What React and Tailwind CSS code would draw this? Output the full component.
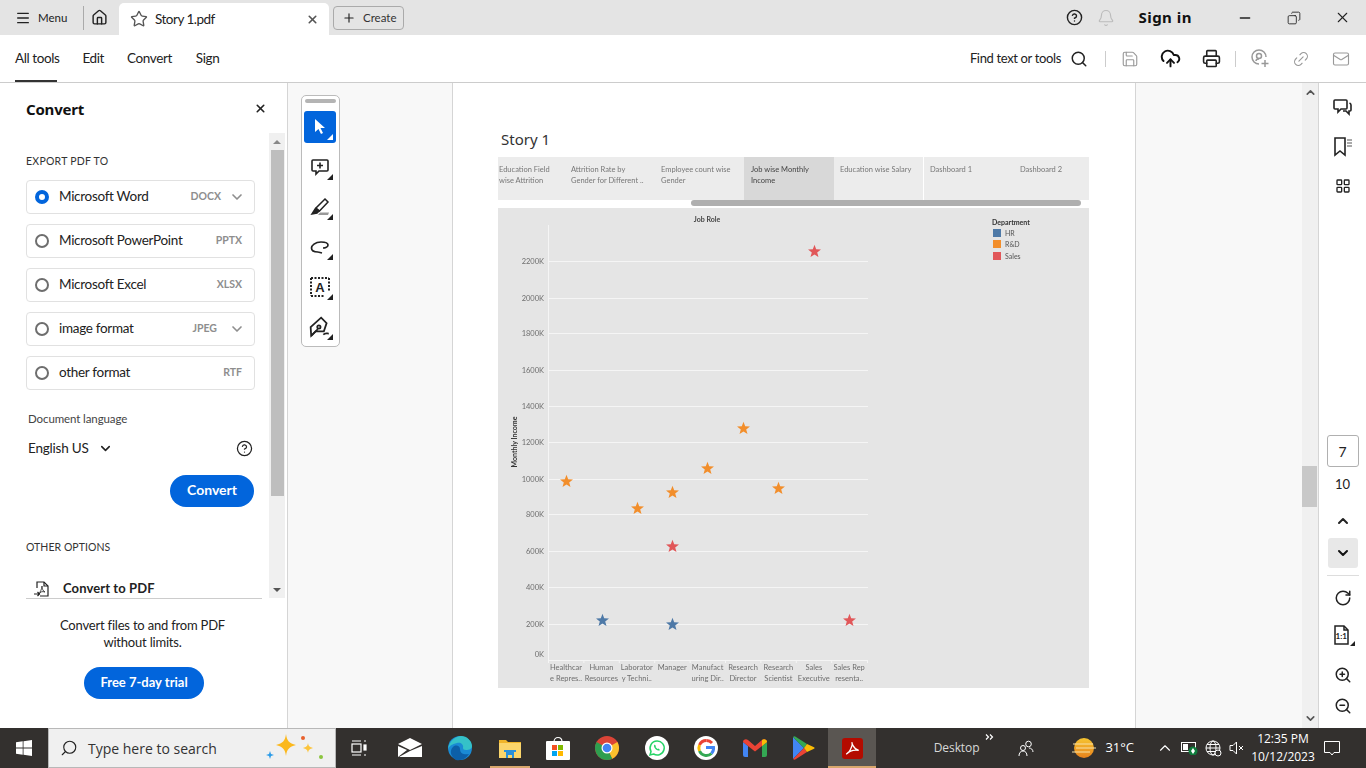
import React from "react";
import { Menu, House, Star, X, Plus, CircleHelp, Bell, Minus, Search, Save, CloudUpload, Printer, Link2, Mail, ChevronDown, ChevronUp, RotateCw, ZoomIn, ZoomOut, LayoutGrid, Copy } from "lucide-react";

const TOOL_FONT = "font-['Lato','Noto_Sans',sans-serif]";

const formats = [
  { label: "Microsoft Word", ext: "DOCX", chevron: true, checked: true },
  { label: "Microsoft PowerPoint", ext: "PPTX" },
  { label: "Microsoft Excel", ext: "XLSX" },
  { label: "image format", ext: "JPEG", chevron: true },
  { label: "other format", ext: "RTF" },
];

const storyTabs = [
  ["Education Field", "wise Attrition"],
  ["Attrition Rate by", "Gender for Different .."],
  ["Employee count wise", "Gender"],
  ["Job wise Monthly", "Income"],
  ["Education wise Salary"],
  ["Dashboard 1"],
  ["Dashboard 2"],
];

const yTicks = [
  ["2200K", 53], ["2000K", 90], ["1800K", 125], ["1600K", 162], ["1400K", 198], ["1200K", 234],
  ["1000K", 271], ["800K", 306], ["600K", 343], ["400K", 379], ["200K", 416],
];

const xLabels = [
  ["Healthcar", "e Repres.."], ["Human", "Resources"], ["Laborator", "y Techni.."], ["Manager", ""],
  ["Manufact", "uring Dir.."], ["Research", "Director"], ["Research", "Scientist"], ["Sales", "Executive"], ["Sales Rep", "resenta.."],
];

const BLUE = "#4e79a7";
const ORANGE = "#f28e2b";
const RED = "#e15759";

// coordinates relative to the grey chart panel
const points = [
  [68.5, 273.5, ORANGE], [104.5, 412.5, BLUE], [139.5, 300.5, ORANGE], [174.5, 284.5, ORANGE], [174.5, 338.5, RED], [174.5, 416.5, BLUE],
  [209.5, 260.5, ORANGE], [245.5, 220.5, ORANGE], [280.5, 280.5, ORANGE], [316.5, 43.5, RED], [351.5, 412.5, RED],
];

function starPoints(cx, cy, r) {
  const out = [];
  for (let i = 0; i < 10; i++) {
    const radius = i % 2 === 0 ? r : r * 0.42;
    const a = -Math.PI / 2 + (i * Math.PI) / 5;
    out.push(`${(cx + radius * Math.cos(a)).toFixed(1)},${(cy + radius * Math.sin(a)).toFixed(1)}`);
  }
  return out.join(" ");
}

const Chart = () => (
  <svg width="591" height="480" className="block blur-[0.3px]" style={{ fontFamily: "'Lato', sans-serif" }}>
    <rect width="591" height="480" fill="#e5e5e5" />
    <text x="209" y="14" fontSize="7" fontWeight="700" fill="#444" textAnchor="middle">Job Role</text>
    <text x="19" y="234" fontSize="7" fontWeight="700" fill="#333" textAnchor="middle" transform="rotate(-90 19 234)">Monthly Income</text>
    <line x1="50.5" y1="17" x2="50.5" y2="452" stroke="#f5f5f5" />
    <line x1="50" y1="452.5" x2="369" y2="452.5" stroke="#f5f5f5" />
    {yTicks.map(([label, y]) => (
      <g key={label}>
        <line x1="50" y1={y + 0.5} x2="370" y2={y + 0.5} stroke="#f5f5f5" />
        <text x="46" y={y + 3} fontSize="7.5" fill="#6e6e6e" textAnchor="end">{label}</text>
      </g>
    ))}
    <text x="46" y="449" fontSize="7.5" fill="#6e6e6e" textAnchor="end">0K</text>
    {xLabels.map(([a, b], i) => (
      <g key={a + b}>
        <line x1={50.5 + i * 35.4} y1="452" x2={50.5 + i * 35.4} y2="455" stroke="#f5f5f5" />
        <text x={68 + i * 35.4} y="462" fontSize="7.5" fill="#6e6e6e" textAnchor="middle">{a}</text>
        <text x={68 + i * 35.4} y="473" fontSize="7.5" fill="#6e6e6e" textAnchor="middle">{b}</text>
      </g>
    ))}
    <line x1="369.5" y1="452" x2="369.5" y2="455" stroke="#f5f5f5" />
    {points.map(([x, y, color]) => (
      <polygon key={`${x}-${y}`} points={starPoints(x, y, 6.8)} fill={color} />
    ))}
    <text x="494" y="17" fontSize="7" fontWeight="700" fill="#333">Department</text>
    {[[BLUE, "HR", 21], [ORANGE, "R&D", 32], [RED, "Sales", 44]].map(([color, label, y]) => (
      <g key={label}>
        <rect x="495" y={y} width="8" height="8" fill={color} />
        <text x="507" y={y + 7} fontSize="7" fill="#555">{label}</text>
      </g>
    ))}
  </svg>
);

const StoryTabs = () => (
  <div className="w-[591px] h-[43px] bg-[#ececec] flex font-['Lato',sans-serif] text-[7.5px] leading-[11px] text-[#777] blur-[0.3px]">
    {storyTabs.map((lines, i) => (
      <div
        key={lines[0]}
        className={
          i === 3 ? "w-[90px] shrink-0 pl-[7px] pt-[7px] bg-[#d8d8d8] text-[#444]"
            : i === 0 ? "w-[66px] shrink-0 pl-[1px] pt-[7px]"
            : i === 4 ? "w-[90px] shrink-0 pl-[6px] pt-[7px] border-r border-white"
            : i > 4 ? "w-[90px] shrink-0 pl-[6px] pt-[7px]"
            : "w-[90px] shrink-0 pl-[7px] pt-[7px]"
        }
      >
        {lines.map((l) => (
          <div key={l} className="whitespace-nowrap">{l}</div>
        ))}
      </div>
    ))}
  </div>
);

const Corner = ({ white }) => (
  <span className={`absolute right-[3px] bottom-[3px] w-0 h-0 border-l-[6px] border-l-transparent border-b-[6px] ${white ? "border-b-white" : "border-b-[#222]"}`} />
);

const RailTool = ({ active, children }) => (
  <div className={`relative w-8 h-8 flex items-center justify-center rounded-[3px] mb-2 ${active ? "bg-[#0265dc]" : ""}`}>
    {children}
    <Corner white={active} />
  </div>
);

const LeftPanel = () => (
  <aside className="w-[288px] shrink-0 border-r border-[#d5d5d5] bg-white flex flex-col">
    <div className="h-[50px] pl-[26px] pr-[20px] pt-[2px] flex items-center justify-between">
      <span className="text-[15px] font-bold text-[#111] font-['Noto_Sans',sans-serif] tracking-[-0.2px]">Convert</span>
      <X size={13} strokeWidth={3} className="text-[#222] -mt-[1px]" />
    </div>
    <div className="h-[465px] overflow-hidden flex">
      <div className="w-[269px] pl-[26px] shrink-0">
        <div className="pt-[21px] h-[47px] text-[10.5px] leading-[14px] tracking-[0.25px] text-[#333]">EXPORT PDF TO</div>
        <div className="flex flex-col gap-[10px] w-[229px]">
          {formats.map((f) => (
            <div key={f.label} className="h-[34px] border border-[#e1e1e1] rounded-[4px] pl-2 pr-[11px] flex items-center">
              <span className={f.checked
                ? "w-[14px] h-[14px] rounded-full border-[4px] border-[#0265dc] bg-white"
                : "w-[14px] h-[14px] rounded-full border-2 border-[#6e6e6e] bg-white"} />
              <span className="ml-[10px] pb-[1px] text-[13.5px] tracking-[-0.3px] text-[#222] whitespace-nowrap">{f.label}</span>
              <span className={`ml-auto text-[10.5px] font-bold text-[#8e8e8e] ${f.ext === "JPEG" ? "mr-[12px]" : f.ext === "DOCX" ? "mr-[8px]" : "mr-[1px]"}`}>{f.ext}</span>
              {f.chevron && <ChevronDown size={16} strokeWidth={2.5} className="text-[#8e8e8e] -mr-[2px]" />}
            </div>
          ))}
        </div>
        <div className="ml-[2px] mt-[21px] text-[11.5px] tracking-[-0.1px] leading-[16px] text-[#444]">Document language</div>
        <div className="ml-[2px] mt-[11px] w-[225px] h-[20px] flex items-center">
          <span className="text-[13.5px] tracking-[-0.2px] text-[#222]">English US</span>
          <ChevronDown size={15} strokeWidth={2.5} className="ml-[9px] text-[#222]" />
          <CircleHelp size={17} strokeWidth={1.75} className="ml-auto text-[#222]" />
        </div>
        <div className="mt-[17px] w-[228px] flex justify-end">
          <div className="w-[84px] h-[32px] pb-[3px] rounded-full bg-[#0265dc] text-white text-[14px] font-bold flex items-center justify-center">Convert</div>
        </div>
        <div className="mt-[32px] text-[10.5px] leading-[16px] tracking-[0.05px] text-[#333]">OTHER OPTIONS</div>
        <div className="mt-[24px] flex items-center h-[20px]">
          <svg width="18" height="18" viewBox="0 0 18 18" fill="none" stroke="#222" strokeWidth="1.2" className="ml-[7px]">
            <path d="M4 8V2h7l4 4v10H7" />
            <path d="M11 2v4h4" />
            <path d="M9 6c0 3 1 5 3 6-3-1-5 0-6 2 1-2 3-5 3-8z" strokeWidth="0.8" />
            <path d="M1 14h5M4.5 12l2 2-2 2" />
          </svg>
          <span className="ml-[12px] text-[13px] tracking-[0.1px] font-bold text-[#222]">Convert to PDF</span>
        </div>
      </div>
      <div className="w-[16px] bg-[#f0f0f0] flex flex-col items-center relative">
        <span className="mt-[7px] w-0 h-0 border-x-[4px] border-x-transparent border-b-[4px] border-b-[#888]" />
        <div className="mt-[6px] w-[13px] h-[346px] bg-[#bebebe]" />
        <span className="absolute bottom-[6px] w-0 h-0 border-x-[4px] border-x-transparent border-t-[4px] border-t-[#555]" />
      </div>
    </div>
    <div className="ml-[26px] w-[236px] border-t border-[#ccc]" />
    <div className="pt-[18px] w-[285px] text-center text-[13px] tracking-[-0.2px] leading-[17px] text-[#222]">
      <div>Convert files to and from PDF</div>
      <div>without limits.</div>
    </div>
    <div className="mt-[16px] ml-[84px] w-[120px] h-[32px] rounded-full bg-[#0265dc] text-white text-[13px] font-bold flex items-center justify-center">Free 7-day trial</div>
  </aside>
);

const ToolRail = () => (
  <div className="w-[165px] shrink-0 bg-[#f8f8f8] pl-[13px] pt-[12px] border-r border-[#d5d5d5]">
    <div className="w-[39px] h-[252px] bg-white border border-[#bbb] rounded-[5px] px-[2px] pt-[3px]">
      <div className="h-1 mb-2 mx-[1px] rounded-sm bg-[#b4b4b4]" />
      <RailTool active>
        <svg width="16" height="18" viewBox="0 0 16 18" fill="white"><path d="M3 1v13l3.5-3 2.5 5 2-1-2.5-5H13z" /></svg>
      </RailTool>
      <RailTool>
        <svg width="20" height="20" viewBox="0 0 20 20" fill="none" stroke="#222" strokeWidth="1.6"><path d="M3 3h14a1 1 0 0 1 1 1v9a1 1 0 0 1-1 1H9l-3 3v-3H3a1 1 0 0 1-1-1V4a1 1 0 0 1 1-1z" /><path d="M10 5.500v6M7 8.500h6" /></svg>
      </RailTool>
      <RailTool>
        <svg width="20" height="20" viewBox="0 0 20 20" fill="none" stroke="#222" strokeWidth="1.5"><path d="M15 2l3 3-8.500 9-3.500-3z" /><path d="M5.500 11.500 2 17l5-1 2-2z" fill="#222" /><path d="M10 15.500h9l-1 2.500h-10z" fill="#999" stroke="none" /></svg>
      </RailTool>
      <RailTool>
        <svg width="20" height="20" viewBox="0 0 20 20" fill="none" stroke="#222" strokeWidth="1.7"><path d="M8 15c-4 0-6.500-1.500-6.500-4S5 5 11 5c4 0 7 1 7 3s-3 3-5 3" /><path d="M8 15l4 1" /></svg>
      </RailTool>
      <RailTool>
        <svg width="20" height="20" viewBox="0 0 20 20" fill="none" stroke="#222" strokeWidth="2"><path d="M1 1h18M1 19h14M1 1v18M19 1v14" strokeDasharray="2 1.500" /><text x="10" y="15" fontSize="13" fontWeight="700" fill="#222" stroke="none" textAnchor="middle" fontFamily="Liberation Sans">A</text></svg>
      </RailTool>
      <RailTool>
        <svg width="22" height="22" viewBox="0 0 20 20" fill="none" stroke="#222" strokeWidth="1.6"><path d="M11 1.500l5 5-2.500 7.500H6L2 18l-.5-8z" /><path d="M2 18l6-6" /><circle cx="9" cy="10" r="1.500" /><path d="M13 17c2-2 3-1 5-1" /></svg>
      </RailTool>
    </div>
  </div>
);

const DocPage = () => (
  <div className="w-[683px] shrink-0 bg-white border-r border-[#d5d5d5] pl-[45px] pt-[46px] overflow-hidden">
    <div className="ml-[3px] h-[28px] text-[15px] leading-5 text-[#333] font-['Noto_Sans',sans-serif]">Story 1</div>
    <StoryTabs />
    <div className="w-[591px] h-[8px] relative">
      <div className="absolute left-[193px] top-0 w-[390px] h-[6px] rounded-full bg-[#afafaf]" />
    </div>
    <Chart />
  </div>
);

const RightRail = () => (
  <div className="flex-1 bg-white flex flex-col items-center text-[#333]">
    <svg width="20" height="20" viewBox="0 0 20 20" fill="none" stroke="#222" strokeWidth="1.6" className="mt-[15px]"><path d="M2 2h11a1 1 0 0 1 1 1v7a1 1 0 0 1-1 1H8l-3 3v-3H2a1 1 0 0 1-1-1V3a1 1 0 0 1 1-1z" /><path d="M16.500 5c1 .5 1.500 1 1.500 2v5a1 1 0 0 1-1 1h-1v3l-3-3h-3" /></svg>
    <svg width="20" height="20" viewBox="0 0 20 20" fill="none" stroke="#222" strokeWidth="1.6" className="mt-[19px]"><path d="M2 1h10v17l-5-4-5 4z" /><path d="M14 3h5M14 6h5M14 9h5" strokeWidth="1.200" stroke="#555" /></svg>
    <LayoutGrid size={16} strokeWidth={2} className="mt-[21px] text-[#222]" />
    <div className="mt-[241px] w-8 h-8 border border-[#b0b0b0] rounded-[3px] flex items-center justify-center text-[14px] text-[#222]">7</div>
    <div className="mt-[8px] h-[18px] text-[13px] leading-[18px] text-[#222]">10</div>
    <ChevronUp size={16} strokeWidth={3} className="mt-[20px] text-[#222]" />
    <div className="mt-[9px] w-[30px] h-[30px] bg-[#e8e8e8] rounded-[3px] flex items-center justify-center"><ChevronDown size={16} strokeWidth={3} className="text-[#111]" /></div>
    <div className="mt-[7px] w-[32px] border-t border-[#ddd]" />
    <RotateCw size={18} strokeWidth={2} className="mt-[13px] text-[#222]" />
    <div className="relative mt-[18px] w-5 h-5">
      <svg width="18" height="20" viewBox="0 0 18 20" fill="none" stroke="#222" strokeWidth="1.500"><path d="M2 1h9l4 4v14H2z" /><path d="M11 1v4h4" /></svg>
      <span className="absolute left-[3px] top-[7px] text-[8px] leading-[9px] font-bold text-[#222]">1:1</span>
      <span className="absolute right-[-2px] bottom-[-1px] w-0 h-0 border-l-[5px] border-l-transparent border-b-[5px] border-b-[#222]" />
    </div>
    <ZoomIn size={18} strokeWidth={2} className="mt-[21px] text-[#222]" />
    <ZoomOut size={18} strokeWidth={2} className="mt-[13px] text-[#222]" />
  </div>
);

const EdgeIcon = () => (
  <svg width="26" height="26" viewBox="0 0 26 26">
    <circle cx="13" cy="13" r="12" fill="#1a8ad4" />
    <path d="M1 14C2 6 9 1 14 1c6 0 11 5 11 10 0 3-3 4-6 4-2 0-3-1-3-2 1-4-3-6-6-5-5 1-8 3-9 6z" fill="#35c1c8" />
    <path d="M9 25c-5-3-7-9-3-13 3-3 7-1 7 2 0 5 5 6 9 5-3 5-8 7-13 6z" fill="#0c5fa8" />
  </svg>
);

const Taskbar = () => (
  <div className="h-[40px] bg-[#33302e] flex items-center text-white shrink-0">
    <div className="w-[48px] flex justify-center">
      <svg width="16" height="16" viewBox="0 0 16 16" fill="white"><path d="M0 2.300 6.700 1.300V7.600H0zM7.500 1.200 16 0V7.600H7.500zM0 8.400H6.700V14.700L0 13.700zM7.500 8.400H16V16L7.500 14.800z" /></svg>
    </div>
    <div className="w-[288px] h-full bg-[#f0f0f0] border border-[#b8b8b8] flex items-center relative text-[#222]">
      <Search size={18} strokeWidth={1.500} className="ml-[11px] -scale-x-100" />
      <span className="ml-[10px] text-[14px] font-['Open_Sans',sans-serif] text-[#333]">Type here to search</span>
      <svg width="60" height="30" viewBox="0 0 60 30" className="absolute left-[214px] top-[4px]">
        <path d="M23 1c1 7 3 9 10 11-7 2-9 4-10 11-1-7-3-9-10-11 7-2 9-4 10-11z" fill="#fbb81d" />
        <path d="M45 10c.5 3 1.500 4 5 5-3.500 1-4.500 2-5 5-.5-3-1.500-4-5-5 3.500-1 4.500-2 5-5z" fill="#fcc43a" />
        <path d="M7 18l1 3 3 1-3 1-1 3-1-3-3-1 3-1z" fill="#2b9be8" />
        <circle cx="40" cy="5" r="2" fill="#e8602c" />
        <circle cx="58" cy="24" r="2" fill="#8bc53f" />
      </svg>
    </div>
    <div className="w-[45px] flex justify-center">
      <svg width="16" height="16" viewBox="0 0 16 16" fill="none" stroke="white" strokeWidth="1.200"><path d="M1 1h9M1 15h9" /><rect x="1" y="4" width="9" height="8" /><path d="M13 1h2M13 15h2" /><rect x="13" y="5" width="2" height="5" fill="white" /></svg>
    </div>
    <div className="w-[50px] ml-[4px] flex justify-center">
      <svg width="24" height="20" viewBox="0 0 24 20"><path d="M0 6 12 0l12 6-12 6z" fill="white" /><path d="M0 8l9 4L0 19zM24 8v11H1l11-6z" fill="white" /></svg>
    </div>
    <div className="w-[50px] flex justify-center"><EdgeIcon /></div>
    <div className="relative w-[49px] h-full flex justify-center items-center">
      <svg width="22" height="19" viewBox="0 0 22 19"><path d="M0 1h7l2 2h13v3H0z" fill="#f0b429" /><rect y="4" width="22" height="15" fill="#fbd56b" /><path d="M7 12h8v7h-2v-3H9v3H7z" fill="#2a90d9" /><rect x="5" y="11" width="12" height="2" fill="#2a90d9" /></svg>
      <span className="absolute bottom-0 left-[5px] w-[40px] h-[2px] bg-[#d9a76c]" />
    </div>
    <div className="w-[48px] flex justify-center">
      <svg width="24" height="24" viewBox="0 0 24 24"><path d="M8 6c0-6 8-6 8 0" fill="none" stroke="white" strokeWidth="1.200" /><rect y="5" width="24" height="19" rx="1" fill="white" /><rect x="6" y="9" width="5" height="5" fill="#f25022" /><rect x="12" y="9" width="5" height="5" fill="#7fba00" /><rect x="6" y="15" width="5" height="5" fill="#00a4ef" /><rect x="12" y="15" width="5" height="5" fill="#ffb900" /></svg>
    </div>
    <div className="w-[50px] flex justify-center">
      <svg width="24" height="24" viewBox="0 0 24 24"><circle cx="12" cy="12" r="12" fill="#db4437" /><path d="M12 12 22.400 6a12 12 0 0 1-5.200 16.800z" fill="#fbc02d" /><path d="M12 12 17.200 22.800A12 12 0 0 1 1.600 6z" fill="#2e9e4f" /><circle cx="12" cy="12" r="5.500" fill="white" /><circle cx="12" cy="12" r="4.300" fill="#4285f4" /></svg>
    </div>
    <div className="w-[49px] flex justify-center">
      <svg width="24" height="24" viewBox="0 0 24 24"><circle cx="12" cy="12" r="12" fill="white" /><path d="M12 5a7 7 0 0 0-6 10.500L5 19l3.600-1A7 7 0 1 0 12 5z" fill="none" stroke="#25d366" strokeWidth="1.500" /><path d="M9.500 8.500c-1 1-.5 3 1 4.500s3.500 2 4.500 1l-1.500-1.500-1 .5-2-2 .5-1z" fill="#25d366" /></svg>
    </div>
    <div className="w-[49px] flex justify-center">
      <svg width="24" height="24" viewBox="0 0 24 24"><circle cx="12" cy="12" r="12" fill="white" /><path d="M18 7a8 8 0 0 0-5.500-2.500" fill="none" stroke="#ea4335" strokeWidth="3" /><path d="M12.500 4.500A7.500 7.500 0 0 0 5.500 9" fill="none" stroke="#ea4335" strokeWidth="3" /><path d="M5.500 9a7.500 7.500 0 0 0 0 6" fill="none" stroke="#fbbc05" strokeWidth="3" /><path d="M5.500 15a7.500 7.500 0 0 0 12 2.500" fill="none" stroke="#34a853" strokeWidth="3" /><path d="M17.500 17.500A7.500 7.500 0 0 0 19.500 11.500H12" fill="none" stroke="#4285f4" strokeWidth="3" /></svg>
    </div>
    <div className="w-[49px] flex justify-center">
      <svg width="24" height="18" viewBox="0 0 24 18"><path d="M0 3v13a2 2 0 0 0 2 2h3V7z" fill="#4285f4" /><path d="M19 7v11h3a2 2 0 0 0 2-2V3z" fill="#34a853" /><path d="M0 3c0-2.500 3-3.500 5-2l7 6 7-6c2-1.500 5-.5 5 2l-5 4-7 5.500L5 7z" fill="#ea4335" /><path d="M19 1c2-1.500 5-.5 5 2l-5 4z" fill="#fbbc05" /></svg>
    </div>
    <div className="w-[49px] flex justify-center">
      <svg width="22" height="24" viewBox="0 0 22 24"><path d="M0 1v22l11-11z" fill="#4285f4" /><path d="M0 1c1-1 2-1 3 0l11 7-3 4z" fill="#34a853" /><path d="M0 23c1 1 2 1 3 0l11-7-3-4z" fill="#ea4335" /><path d="M14 8l6.500 3c1.500 .5 1.500 1.500 0 2L14 16l-3-4z" fill="#fbbc05" /></svg>
    </div>
    <div className="relative w-[48px] h-full bg-[#5a5652] flex justify-center items-center">
      <div className="w-[21px] h-[21px] rounded-[3px] bg-[#b30b00] flex items-center justify-center">
        <svg width="15" height="15" viewBox="0 0 24 24" fill="none" stroke="white" strokeWidth="2"><path d="M2 21c4-2 7-7 9-13 1-3 0-6 0-6s2 11 11 13c-6-1-14 0-20 6z" /></svg>
      </div>
      <span className="absolute bottom-0 inset-x-0 h-[2px] bg-[#d9a76c]" />
    </div>
    <div className="ml-auto flex items-center h-full text-[#d8d8d8] relative">
      <span className="text-[12px] font-['Open_Sans',sans-serif] -tracking-[0.1px]">Desktop</span>
      <svg width="9" height="7" viewBox="0 0 9 7" fill="none" stroke="white" strokeWidth="1.200" className="absolute left-[51px] top-[6px]"><path d="M1 .5l2.500 2.500L1 5.500M5 .5l2.500 2.500L5 5.500" /></svg>
      <svg width="16" height="16" viewBox="0 0 16 16" fill="none" stroke="white" strokeWidth="1" className="ml-[39px]"><circle cx="10.500" cy="4" r="2.800" /><circle cx="5" cy="8" r="2.500" /><path d="M1 16c0-3 1.500-5 4-5s4 2 4 5M11 8c2 0 4 1.500 4 4" /></svg>
      <svg width="24" height="20" viewBox="0 0 24 20" className="ml-[38px]"><defs><linearGradient id="sun" x1="0" y1="0" x2="0" y2="1"><stop offset="0" stopColor="#f6c531" /><stop offset="1" stopColor="#e8821c" /></linearGradient></defs><circle cx="12" cy="10" r="10" fill="url(#sun)" /><path d="M1 6h20M4 10h20M0 14h18" stroke="#f8e2a8" strokeWidth="1.200" /></svg>
      <span className="ml-[9px] text-[13px] font-['Open_Sans',sans-serif] text-white">31°C</span>
      <ChevronUp size={18} strokeWidth={1.500} className="ml-[22px] text-white" />
      <svg width="18" height="14" viewBox="0 0 18 14" className="ml-[7px]"><rect x="0.500" y="1.500" width="14" height="9" fill="none" stroke="white" /><rect x="2" y="3" width="5" height="6" fill="white" /><circle cx="12" cy="10" r="4.500" fill="#0f7b3c" /><path d="M12 7l-2 3 2 3 2-3z" fill="white" /></svg>
      <svg width="17" height="17" viewBox="0 0 17 17" fill="none" stroke="white" strokeWidth="1" className="ml-[6px]"><circle cx="8" cy="8" r="7" /><ellipse cx="8" cy="8" rx="3" ry="7" /><path d="M1 8h14M2 4.500h12M2 11.500h12" /><circle cx="13" cy="13" r="3" fill="#33302e" /></svg>
      <svg width="15" height="14" viewBox="0 0 15 14" fill="none" stroke="white" strokeWidth="1" className="ml-[7px]"><path d="M1 4.500h3L7.500 1v12L4 9.500H1z" /><path d="M10 5l4 4M14 5l-4 4" /></svg>
      <div className="w-[78px] text-center text-[12px] leading-[18px] text-white font-['Open_Sans',sans-serif]"><div>12:35 PM</div><div>10/12/2023</div></div>
      <svg width="16" height="15" viewBox="0 0 16 15" fill="none" stroke="white" strokeWidth="1" className="ml-[2px] mr-[26px]"><path d="M.5 .5h15v11H10l-2 2.500-2-2.500H.5z" /></svg>
    </div>
  </div>
);

export default function App() {
  return (
    <div className={`w-[1366px] h-[768px] overflow-hidden flex flex-col bg-white ${TOOL_FONT}`}>
      <header className="h-[35px] bg-[#e4e4e4] flex items-end shrink-0 text-[#222]">
        <div className="h-full flex items-center pl-[15px] w-[83px]">
          <Menu size={16} strokeWidth={2} />
          <span className="ml-[7px] text-[11.5px]">Menu</span>
        </div>
        <div className="self-center w-px h-6 bg-[#aaa]" />
        <div className="w-[31px] h-full flex items-center justify-center"><House size={17} strokeWidth={2} /></div>
        <div className="ml-[4px] w-[210px] h-[32px] bg-white rounded-t-[5px] flex items-center pl-[11px] pr-[10px]">
          <Star size={18} strokeWidth={1.800} className="text-[#555]" />
          <span className="ml-[7px] text-[13.5px] tracking-[-0.5px] text-[#222]">Story 1.pdf</span>
          <X size={13} strokeWidth={3} className="ml-auto text-[#555]" />
        </div>
        <div className="self-center ml-[4px] w-[71px] h-[24px] border border-[#aaa] rounded-[4px] flex items-center pl-[8px]">
          <Plus size={14} strokeWidth={2} />
          <span className="ml-[7px] text-[11.5px] text-[#333]">Create</span>
        </div>
        <div className="ml-auto h-full flex items-center">
          <CircleHelp size={17} strokeWidth={2} />
          <Bell size={18} strokeWidth={1.500} className="ml-[14px] text-[#bbb]" />
          <span className="ml-[23px] text-[15px] font-bold tracking-[0.5px] text-[#111] font-['Noto_Sans',sans-serif]">Sign in</span>
          <Minus size={16} strokeWidth={2} className="ml-[45px]" />
          <Copy size={14} strokeWidth={1.500} className="ml-[34px] -scale-x-100" />
          <X size={17} strokeWidth={1.500} className="ml-[33px] mr-[15px]" />
        </div>
      </header>
      <nav className="h-[48px] border-b border-[#ccc] flex items-center shrink-0 text-[13.5px] tracking-[-0.4px] text-[#222]">
        <div className="ml-[15px] relative h-full flex items-center">
          All tools
          <span className="absolute bottom-0 left-0 w-[42px] h-[2px] bg-[#333]" />
        </div>
        <span className="ml-[23px]">Edit</span>
        <span className="ml-[23px]">Convert</span>
        <span className="ml-[24px]">Sign</span>
        <div className="ml-auto flex items-center">
          <span className="mr-[9px] text-[13px] tracking-[-0.35px]">Find text or tools</span>
          <Search size={18} strokeWidth={2} className="text-[#222]" />
          <span className="ml-[17px] w-px h-[16px] bg-[#ccc]" />
          <Save size={18} strokeWidth={1.500} className="ml-[15px] text-[#999]" />
          <CloudUpload size={21} strokeWidth={2.200} className="ml-[21px] text-[#111]" />
          <Printer size={19} strokeWidth={2} className="ml-[21px] text-[#222]" />
          <span className="ml-[14px] w-px h-[16px] bg-[#ccc]" />
          <svg width="19" height="19" viewBox="0 0 19 19" fill="none" stroke="#999" strokeWidth="1.500" className="ml-[15px]"><path d="M8 15A7 7 0 1 1 15 8" /><circle cx="8" cy="7" r="2.500" /><path d="M5 12c0-1 1-2 3-2" /><path d="M14 11v7M10.500 14.500h7" /></svg>
          <Link2 size={18} strokeWidth={1.500} className="ml-[22px] text-[#999] -rotate-45" />
          <Mail size={18} strokeWidth={1.500} className="ml-[22px] mr-[16px] text-[#999]" />
        </div>
      </nav>
      <main className="flex-1 flex min-h-0">
        <LeftPanel />
        <ToolRail />
        <DocPage />
        <div className="w-[166px] shrink-0 bg-[#f8f8f8]" />
        <div className="w-[17px] shrink-0 bg-[#f0f0f0] border-r border-[#d5d5d5] relative flex flex-col items-center">
          <ChevronUp size={13} strokeWidth={3} className="mt-[3px] text-[#555]" />
          <div className="absolute top-[383px] left-0 w-[15px] h-[41px] bg-[#c8c8c8]" />
          <ChevronDown size={13} strokeWidth={3} className="mt-auto mb-[3px] text-[#555]" />
        </div>
        <RightRail />
      </main>
      <Taskbar />
    </div>
  );
}
